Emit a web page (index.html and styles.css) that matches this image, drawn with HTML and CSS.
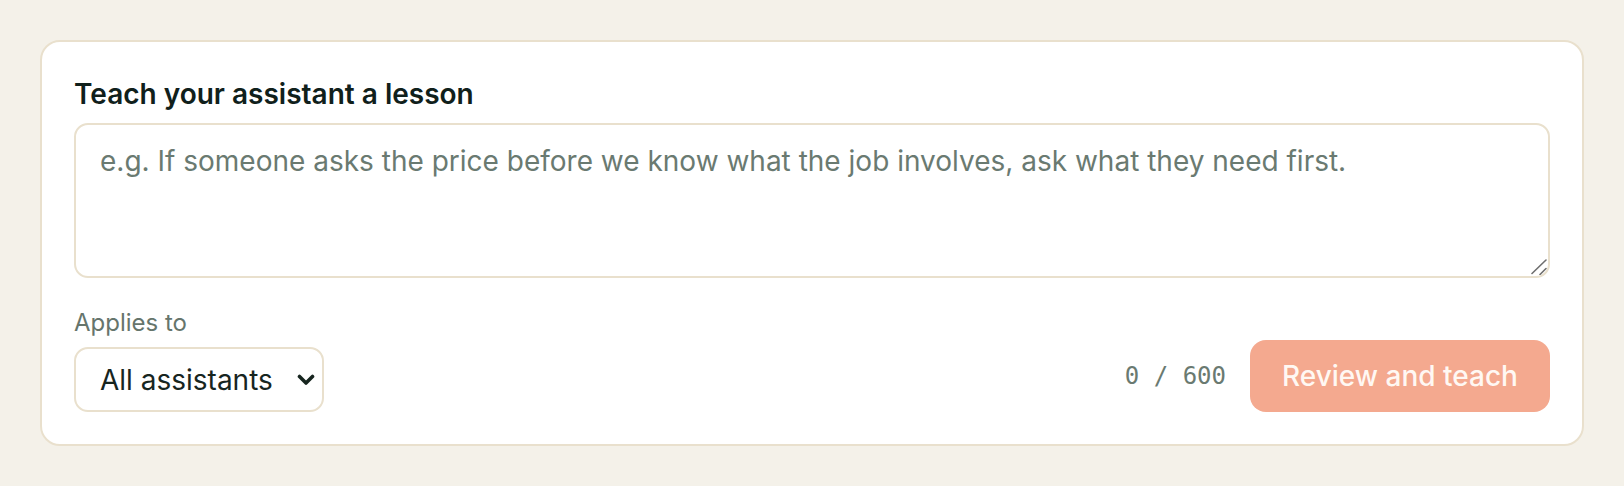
FILE: index.html
```html
<!DOCTYPE html>
<html lang="en">
<head>
<meta charset="utf-8">
<title>Teach your assistant</title>
<link rel="stylesheet" href="styles.css">
</head>
<body>
  <section class="lesson-card">
    <label class="lesson-title" for="lesson">Teach your assistant a lesson</label>
    <div class="input-wrap">
      <textarea id="lesson" class="lesson-input" maxlength="600" placeholder="e.g. If someone asks the price before we know what the job involves, ask what they need first."></textarea>
      <svg class="grip" width="16" height="16" viewBox="0 0 16 16" aria-hidden="true">
        <path d="M1 14.5 L15 1 M9 15.5 L15 9.5" stroke="#6f6f6f" stroke-width="1.6" stroke-linecap="round" fill="none"/>
      </svg>
    </div>
    <div class="lesson-footer">
      <div class="scope">
        <label class="scope-label" for="scope">Applies to</label>
        <div class="select-wrap">
          <select id="scope" class="scope-select">
            <option>All assistants</option>
          </select>
          <svg class="chevron" width="18" height="12" viewBox="0 0 18 12" aria-hidden="true">
            <path d="M2.5 2.5 L9 9 L15.5 2.5" stroke="#17251f" stroke-width="3.6" stroke-linecap="round" stroke-linejoin="round" fill="none"/>
          </svg>
        </div>
      </div>
      <div class="actions">
        <span class="counter">0 / 600</span>
        <button class="teach-btn" type="button" disabled>Review and teach</button>
      </div>
    </div>
  </section>
</body>
</html>
```
FILE: styles.css
```css
* {
  box-sizing: border-box;
}

html, body {
  margin: 0;
  background: #f4f1e9;
}

body {
  padding: 40px;
  font-family: Inter, "Noto Sans", sans-serif;
  color: #10201b;
}

.lesson-card {
  display: flex;
  flex-direction: column;
  background: #ffffff;
  border: 2px solid #e9e0cd;
  border-radius: 20px;
  padding: 32px;
}

.lesson-title {
  font-size: 28px;
  font-weight: 600;
  line-height: 39px;
  color: #10201b;
  padding-top: 1px;
  margin-bottom: 9px;
}

.input-wrap {
  position: relative;
}

.lesson-input {
  display: block;
  width: 100%;
  height: 155px;
  border: 2px solid #e9e0cd;
  border-radius: 14px;
  padding: 15px 24px 11px;
  font-family: Inter, "Noto Sans", sans-serif;
  font-size: 28px;
  line-height: 42px;
  color: #10201b;
  resize: none;
  outline: none;
}

.lesson-input::placeholder {
  color: #6a7a71;
}

/* resize handle in the lower right corner */
.grip {
  position: absolute;
  right: 3px;
  bottom: 3px;
  pointer-events: none;
}

.lesson-footer {
  display: flex;
  justify-content: space-between;
  align-items: flex-end;
  margin-top: 27px;
}

.scope {
  display: flex;
  flex-direction: column;
  gap: 6px;
}

.scope-label {
  font-size: 24px;
  line-height: 36px;
  color: #66756c;
}

.select-wrap {
  position: relative;
  width: 250px;
}

.scope-select {
  appearance: none;
  -webkit-appearance: none;
  width: 250px;
  height: 65px;
  border: 2px solid #e9e0cd;
  border-radius: 14px;
  background: #ffffff;
  padding: 0 40px 0 24px;
  font-family: Inter, "Noto Sans", sans-serif;
  font-size: 28px;
  color: #17251f;
  outline: none;
}

.chevron {
  position: absolute;
  right: 9px;
  top: 50%;
  margin-top: -6px;
  pointer-events: none;
}

.actions {
  display: flex;
  align-items: center;
  gap: 24px;
}

.counter {
  font-family: "DejaVu Sans Mono", monospace;
  font-size: 24px;
  color: #6a7a71;
}

.teach-btn {
  width: 300px;
  height: 72px;
  border: none;
  border-radius: 16px;
  background: #f4a98f;
  color: #fff8f3;
  font-family: Inter, "Noto Sans", sans-serif;
  font-size: 28px;
  font-weight: 500;
}
```
